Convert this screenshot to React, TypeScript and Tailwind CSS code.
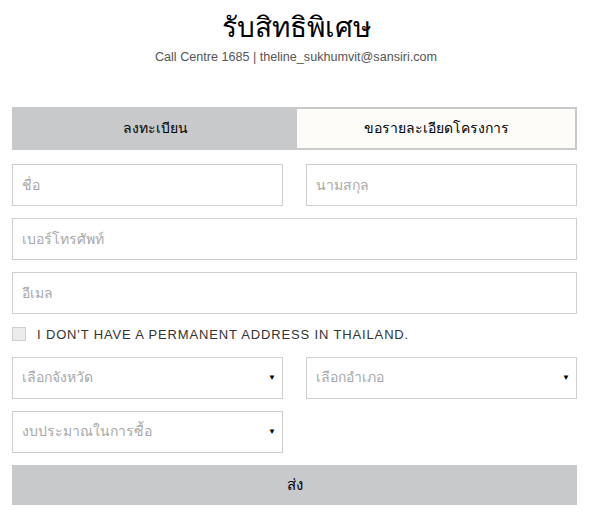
import { useState } from "react";

export default function App() {
  const [tab, setTab] = useState(0);
  const [noAddress, setNoAddress] = useState(false);

  const inputCls =
    "h-[42px] w-full border border-[#cfcfcf] bg-white px-[9px] text-[14px] text-[#333] placeholder:text-[#a8a8a8] outline-none";
  const selectCls =
    "relative flex h-[42px] w-full items-center border border-[#cfcfcf] bg-white px-[9px] text-[14px] text-[#a8a8a8]";

  return (
    <div
      className="min-h-screen w-full bg-white pt-[10px]"
      style={{ fontFamily: '"Liberation Sans", "Noto Sans", sans-serif' }}
    >
      <div className="flex flex-col items-center">
        <h1 className="text-[28px] leading-[36px] text-black">รับสิทธิพิเศษ</h1>
        <p className="mt-[2px] text-[12.6px] text-[#555]">
          Call Centre 1685 | theline_sukhumvit@sansiri.com
        </p>
      </div>

      <div className="ml-[12px] mt-[40px] w-[565px]">
        <div className="flex h-[43px] border-2 border-[#c8c9cb]">
          <button
            onClick={() => setTab(0)}
            className={`w-[283px] text-[14px] font-normal text-black ${
              tab === 0 ? "bg-[#c8c9cb]" : "bg-[#fdfcf8]"
            }`}
          >
            ลงทะเบียน
          </button>
          <button
            onClick={() => setTab(1)}
            className={`flex-1 text-[14px] font-normal text-black ${
              tab === 1 ? "bg-[#c8c9cb]" : "bg-[#fdfcf8]"
            }`}
          >
            ขอรายละเอียดโครงการ
          </button>
        </div>

        <div className="mt-[14px] grid grid-cols-2 gap-x-[23px]">
          <input className={inputCls} placeholder="ชื่อ" />
          <input className={inputCls} placeholder="นามสกุล" />
        </div>
        <div className="mt-[12px]">
          <input className={inputCls} placeholder="เบอร์โทรศัพท์" />
        </div>
        <div className="mt-[12px]">
          <input className={inputCls} placeholder="อีเมล" />
        </div>

        <label className="mt-[13px] flex h-[15px] items-center gap-[11px]">
          <span
            onClick={() => setNoAddress(!noAddress)}
            className="flex h-[14px] w-[14px] items-center justify-center border border-[#cfcfcf] bg-[#ececec] text-[10px]"
          >
            {noAddress ? "✓" : ""}
          </span>
          <span className="text-[13px] tracking-[0.85px] text-[#333]">
            I DON'T HAVE A PERMANENT ADDRESS IN THAILAND.
          </span>
        </label>

        <div className="mt-[15px] grid grid-cols-2 gap-x-[23px]">
          <div className={selectCls}>
            เลือกจังหวัด
            <span className="absolute right-[6px] top-[14px] text-[8px] text-black">▼</span>
          </div>
          <div className={selectCls}>
            เลือกอำเภอ
            <span className="absolute right-[6px] top-[14px] text-[8px] text-black">▼</span>
          </div>
        </div>
        <div className="mt-[12px] grid grid-cols-2 gap-x-[23px]">
          <div className={selectCls}>
            งบประมาณในการซื้อ
            <span className="absolute right-[6px] top-[14px] text-[8px] text-black">▼</span>
          </div>
        </div>

        <button className="mt-[12px] h-[40px] w-full bg-[#c8c9cb] text-[15px] text-black">
          ส่ง
        </button>
      </div>
    </div>
  );
}
